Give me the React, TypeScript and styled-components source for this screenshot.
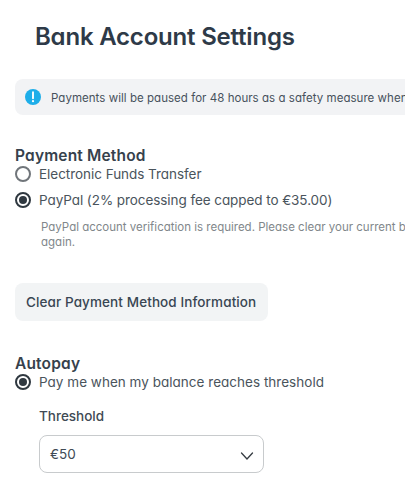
import React from "react";
import styled, { createGlobalStyle } from "styled-components";

const Global = createGlobalStyle`
  * { box-sizing: border-box; }
  html, body { margin: 0; height: 100%; overflow: hidden; background: #fff; }
  body {
    font-family: Inter, "Noto Sans", sans-serif;
    font-feature-settings: "cv11" 1;
    color: #4a545c;
  }
`;

const Page = styled.main`
  width: 100%;
  height: 485px;
  overflow: hidden;
  padding: 21px 0 0 15px;
`;

const Title = styled.h1`
  margin: 0 0 0 20px;
  font-size: 24px;
  line-height: 32px;
  font-weight: 600;
  letter-spacing: -0.2px;
  color: #2e3a48;
  white-space: nowrap;
`;

const Notice = styled.div`
  display: flex;
  align-items: center;
  gap: 10px;
  width: 520px;
  height: 36px;
  margin-top: 26px;
  padding-left: 10px;
  border-radius: 8px;
  background: #f2f3f5;
  svg { flex: none; }
`;

const NoticeText = styled.span`
  font-size: 11.5px;
  line-height: 16px;
  letter-spacing: 0.04px;
  white-space: nowrap;
  padding-top: 2px;
  color: #47515c;
`;

const Section = styled.section<{ $top: number }>`
  margin-top: ${(p) => p.$top}px;
`;

const Heading = styled.h2`
  margin: 0;
  font-size: 15.5px;
  line-height: 20px;
  height: 19px;
  font-weight: 600;
  letter-spacing: 0.17px;
  color: #36414c;
`;

const Option = styled.label<{ $top?: number; $spacing?: number }>`
  display: flex;
  align-items: center;
  gap: 8px;
  height: 18px;
  margin-top: ${(p) => p.$top ?? 0}px;
  font-size: 13.5px;
  line-height: 18px;
  letter-spacing: ${(p) => p.$spacing ?? 0}px;
  white-space: nowrap;
`;

const Radio = styled.span<{ $checked?: boolean }>`
  display: flex;
  align-items: center;
  justify-content: center;
  flex: none;
  width: 16px;
  height: 16px;
  border: 2px solid ${(p) => (p.$checked ? "#2f3840" : "#70757a")};
  border-radius: 50%;
  &::after {
    content: "";
    width: 8px;
    height: 8px;
    border-radius: 50%;
    background: ${(p) => (p.$checked ? "#2f3840" : "transparent")};
  }
`;

const Help = styled.p`
  margin: 11px 0 0 26px;
  font-size: 11.5px;
  line-height: 15px;
  color: #81878b;
  white-space: nowrap;
`;

const ClearButton = styled.button`
  display: block;
  width: 253px;
  height: 38px;
  margin-top: 33px;
  padding: 0 0 0 11px;
  border: 0;
  border-radius: 8px;
  background: #f2f4f5;
  color: #394653;
  font: 500 13.5px/18px Inter, sans-serif;
  font-feature-settings: inherit;
  letter-spacing: 0.1px;
  text-align: left;
  white-space: nowrap;
`;

const Field = styled.div`
  margin: 16px 0 0 24px;
  width: 225px;
`;

const FieldLabel = styled.div`
  font-size: 13.5px;
  line-height: 18px;
  font-weight: 500;
  color: #404a54;
`;

const Select = styled.div`
  display: flex;
  align-items: center;
  justify-content: space-between;
  height: 38px;
  margin-top: 10px;
  padding: 0 9px 0 10px;
  border: 1px solid #c8cbcd;
  border-radius: 8px;
  font-size: 13.5px;
  color: #404a54;
  svg { margin-top: 3px; }
`;

const AlertIcon = () => (
  <svg width="16" height="16" viewBox="0 0 16 16">
    <circle cx="8" cy="8" r="8" fill="#1eaee9" />
    <path d="M8 3.200v6" stroke="#fff" strokeWidth="1.9" strokeLinecap="round" />
    <circle cx="8" cy="12.2" r="1.1" fill="#fff" />
  </svg>
);

const Chevron = () => (
  <svg width="14" height="10" viewBox="0 0 14 10">
    <path d="M1.500 2 7 8l5.500-6" fill="none" stroke="#363c42" strokeWidth="1.3" strokeLinecap="round" />
  </svg>
);

export default function App() {
  return (
    <>
      <Global />
      <Page>
        <Title>Bank Account Settings</Title>
        <Notice>
          <AlertIcon />
          <NoticeText>
            Payments will be paused for 48 hours as a safety measure when
          </NoticeText>
        </Notice>
        <Section $top={31}>
          <Heading>Payment Method</Heading>
          <Option $spacing={-0.04}>
            <Radio />
            Electronic Funds Transfer
          </Option>
          <Option $top={8} $spacing={-0.07}>
            <Radio $checked />
            PayPal (2% processing fee capped to €35.00)
          </Option>
          <Help>
            PayPal account verification is required. Please clear your current b
            <br />
            again.
          </Help>
          <ClearButton>Clear Payment Method Information</ClearButton>
        </Section>
        <Section $top={33}>
          <Heading>Autopay</Heading>
          <Option $spacing={0.02}>
            <Radio $checked />
            Pay me when my balance reaches threshold
          </Option>
          <Field>
            <FieldLabel>Threshold</FieldLabel>
            <Select>
              €50
              <Chevron />
            </Select>
          </Field>
        </Section>
      </Page>
    </>
  );
}
